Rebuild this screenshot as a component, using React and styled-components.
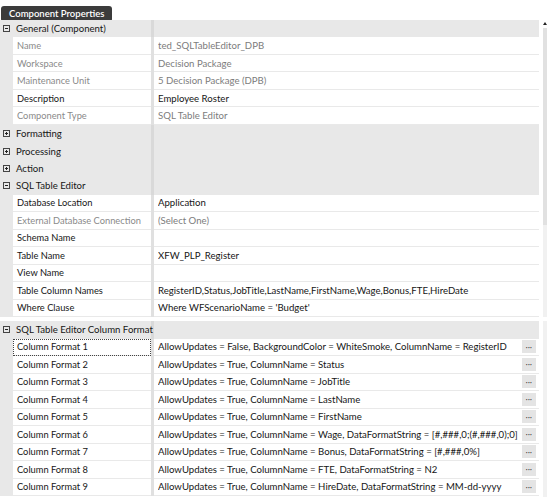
import React from 'react'
import styled, { createGlobalStyle } from 'styled-components'

const GlobalStyle = createGlobalStyle`
  html, body {
    margin: 0;
    padding: 0;
    background: #fff;
  }
  body {
    font-family: Lato, "Open Sans", sans-serif;
  }
`

const Page = styled.div`
  width: 549px;
  height: 497px;
  overflow: hidden;
  display: flex;
  flex-direction: column;
`

const TitleBar = styled.div`
  height: 20px;
  padding: 1px 0 0 1px;
  box-sizing: border-box;
`

const Tab = styled.div`
  display: inline-block;
  height: 16px;
  line-height: 16px;
  padding: 0 8px;
  background: #3b3b3b;
  color: #fff;
  font-size: 9.5px;
  font-weight: 600;
  border-radius: 3px;
`

const Panel = styled.div`
  display: flex;
  flex: 0 0 auto;
  height: ${(p) => p.$height}px;
  margin-top: ${(p) => p.$gap || 0}px;
  overflow: hidden;
`

const Grid = styled.div`
  flex: 0 0 539px;
  display: flex;
  flex-direction: column;
`

const ScrollArea = styled.div`
  flex: 0 0 auto;
  width: 4px;
  margin-left: 4px;
  display: flex;
  flex-direction: column;
  align-items: center;
`

const ScrollArrow = styled.div`
  width: 0;
  height: 0;
  margin: 2px 0 3px;
  border-left: 2px solid transparent;
  border-right: 2px solid transparent;
  border-bottom: 3px solid #222;
`

const ScrollTrack = styled.div`
  width: 4px;
  flex: 1;
  background: #f1f1f1;
  display: flex;
  flex-direction: column;
`

const ScrollThumb = styled.div`
  height: ${(p) => p.$size}px;
  background: #e1e1e1;
`

const Row = styled.div`
  display: grid;
  grid-template-columns: 13px 138px 3px 385px;
  height: 17.5px;
  font-size: 9.3px;
  background: ${(p) => (p.$header ? '#e8e8e8' : '#fff')};
`

const Gutter = styled.div`
  background: #e8e8e8;
  display: flex;
  align-items: center;
  justify-content: center;
`

const Label = styled.div`
  display: flex;
  align-items: center;
  padding-left: ${(p) => (p.$header ? 3 : 4)}px;
  color: ${(p) => (p.$muted ? '#8a8a8a' : '#161616')};
  font-size: ${(p) => (p.$header ? '9.6px' : 'inherit')};
  white-space: nowrap;
  overflow: ${(p) => (p.$header ? 'visible' : 'hidden')};
  position: relative;
  z-index: 1;
  box-sizing: border-box;
  border-bottom: ${(p) => (p.$header ? 'none' : '1px solid #e9e9e9')};
  outline: ${(p) => (p.$focused ? '1px dotted #444' : 'none')};
  outline-offset: -1px;
`

const Divider = styled.div`
  background: ${(p) => (p.$header ? '#d9d9d9' : '#e0e0e0')};
`

const Value = styled.div`
  display: flex;
  align-items: center;
  padding-left: 4px;
  padding-right: 3px;
  font-size: 9.6px;
  color: ${(p) => (p.$muted ? '#7c7c7c' : '#161616')};
  white-space: nowrap;
  overflow: hidden;
  box-sizing: border-box;
  border-bottom: ${(p) => (p.$header ? 'none' : '1px solid #e9e9e9')};
`

const ValueText = styled.span`
  flex: 1;
  min-width: 0;
  overflow: hidden;
`

const MoreButton = styled.div`
  flex: 0 0 14px;
  height: 13px;
  margin-left: 4px;
  background: #e4e4e4;
  color: #333;
  display: flex;
  align-items: center;
  justify-content: center;
  font-size: 7px;
  font-weight: 400;
  letter-spacing: 0.4px;
`

function ToggleIcon({ open }) {
  return (
    <svg width="7" height="7" viewBox="0 0 7 7">
      <rect x="0.5" y="0.5" width="6" height="6" fill="none" stroke="#444" strokeWidth="1" />
      <line x1="2" y1="3.5" x2="5" y2="3.5" stroke="#222" strokeWidth="1" />
      {!open && <line x1="3.5" y1="2" x2="3.5" y2="5" stroke="#222" strokeWidth="1" />}
    </svg>
  )
}

const mainRows = [
  { header: 'General (Component)', open: true },
  { label: 'Name', value: 'ted_SQLTableEditor_DPB', muted: true },
  { label: 'Workspace', value: 'Decision Package', muted: true },
  { label: 'Maintenance Unit', value: '5 Decision Package (DPB)', muted: true },
  { label: 'Description', value: 'Employee Roster' },
  { label: 'Component Type', value: 'SQL Table Editor', muted: true },
  { header: 'Formatting', open: false },
  { header: 'Processing', open: false },
  { header: 'Action', open: false },
  { header: 'SQL Table Editor', open: true },
  { label: 'Database Location', value: 'Application' },
  { label: 'External Database Connection', value: '(Select One)', muted: true },
  { label: 'Schema Name', value: '' },
  { label: 'Table Name', value: 'XFW_PLP_Register' },
  { label: 'View Name', value: '' },
  { label: 'Table Column Names', value: 'RegisterID,Status,JobTitle,LastName,FirstName,Wage,Bonus,FTE,HireDate' },
  { label: 'Where Clause', value: "Where WFScenarioName = 'Budget'" },
]

const formatRows = [
  { header: 'SQL Table Editor Column Format', open: true },
  { label: 'Column Format 1', value: 'AllowUpdates = False, BackgroundColor = WhiteSmoke, ColumnName = RegisterID', more: true, focused: true },
  { label: 'Column Format 2', value: 'AllowUpdates = True, ColumnName = Status', more: true },
  { label: 'Column Format 3', value: 'AllowUpdates = True, ColumnName = JobTitle', more: true },
  { label: 'Column Format 4', value: 'AllowUpdates = True, ColumnName = LastName', more: true },
  { label: 'Column Format 5', value: 'AllowUpdates = True, ColumnName = FirstName', more: true },
  { label: 'Column Format 6', value: 'AllowUpdates = True, ColumnName = Wage, DataFormatString = [#,###,0;(#,###,0);0]', more: true },
  { label: 'Column Format 7', value: 'AllowUpdates = True, ColumnName = Bonus, DataFormatString = [#,###,0%]', more: true },
  { label: 'Column Format 8', value: 'AllowUpdates = True, ColumnName = FTE, DataFormatString = N2', more: true },
  { label: 'Column Format 9', value: 'AllowUpdates = True, ColumnName = HireDate, DataFormatString = MM-dd-yyyy', more: true },
]

function PropertyRow({ row }) {
  if (row.header) {
    return (
      <Row $header>
        <Gutter>
          <ToggleIcon open={row.open} />
        </Gutter>
        <Label $header>{row.header}</Label>
        <Divider $header />
        <Value $header />
      </Row>
    )
  }
  return (
    <Row>
      <Gutter />
      <Label $muted={row.muted} $focused={row.focused}>{row.label}</Label>
      <Divider />
      <Value $muted={row.muted}>
        <ValueText>{row.value}</ValueText>
        {row.more && <MoreButton>···</MoreButton>}
      </Value>
    </Row>
  )
}

function PropertyPanel({ rows, height, gap, thumb, arrow }) {
  return (
    <Panel $height={height} $gap={gap}>
      <Grid>
        {rows.map((row, i) => (
          <PropertyRow key={i} row={row} />
        ))}
      </Grid>
      <ScrollArea>
        {arrow && <ScrollArrow />}
        <ScrollTrack>{thumb > 0 && <ScrollThumb $size={thumb} />}</ScrollTrack>
      </ScrollArea>
    </Panel>
  )
}

export default function App() {
  return (
    <Page>
      <GlobalStyle />
      <TitleBar>
        <Tab>Component Properties</Tab>
      </TitleBar>
      <PropertyPanel rows={mainRows} height={297} thumb={197} arrow />
      <PropertyPanel rows={formatRows} height={176} gap={4} thumb={0} />
    </Page>
  )
}
